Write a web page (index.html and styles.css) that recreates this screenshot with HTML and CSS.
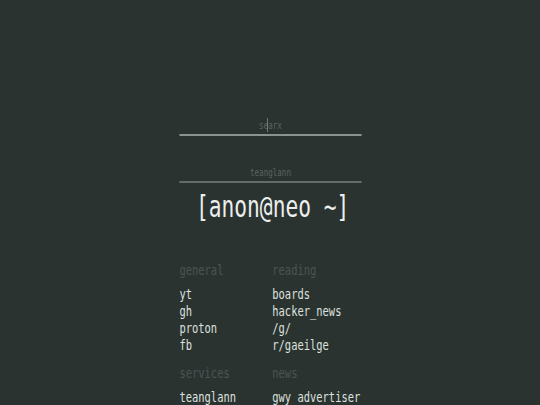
FILE: index.html
```html
<!DOCTYPE html>
<html lang="en">
<head>
<meta charset="utf-8">
<title>[anon@neo ~]</title>
<link rel="stylesheet" href="styles.css">
</head>
<body>
<main class="main">
  <form class="search">
    <div class="field field-active">
      <input class="input" type="text" placeholder="searx">
      <span class="caret"></span>
    </div>
    <div class="field">
      <input class="input" type="text" placeholder="teanglann">
    </div>
  </form>
  <h1 class="title">[anon@neo ~]</h1>
  <div class="groups">
    <section class="group">
      <h2 class="group-title">general</h2>
      <ul class="links">
        <li><a href="#">yt</a></li>
        <li><a href="#">gh</a></li>
        <li><a href="#">proton</a></li>
        <li><a href="#">fb</a></li>
      </ul>
    </section>
    <section class="group">
      <h2 class="group-title">reading</h2>
      <ul class="links">
        <li><a href="#">boards</a></li>
        <li><a href="#">hacker_news</a></li>
        <li><a href="#">/g/</a></li>
        <li><a href="#">r/gaeilge</a></li>
      </ul>
    </section>
    <section class="group">
      <h2 class="group-title">services</h2>
      <ul class="links">
        <li><a href="#">teanglann</a></li>
      </ul>
    </section>
    <section class="group">
      <h2 class="group-title">news</h2>
      <ul class="links">
        <li><a href="#">gwy_advertiser</a></li>
      </ul>
    </section>
  </div>
</main>
</body>
</html>
```
FILE: styles.css
```css
* { box-sizing: border-box; }

html, body {
  margin: 0;
  padding: 0;
  height: 100%;
}

body {
  background: #2b3331;
  color: #dadedc;
  font-family: "DejaVu Sans Mono", "Liberation Mono", monospace;
  overflow: hidden;
}

.main {
  width: 253px;
  margin: 0 auto;
  padding-top: 118px;
  transform: scaleX(0.72);
  transform-origin: center top;
}

.search {
  display: flex;
  flex-direction: column;
  gap: 29px;
  margin: 0;
}

.field {
  position: relative;
  border-bottom: 2px solid #646b69;
  padding-bottom: 2px;
}

.field-active {
  border-bottom-color: #8c9290;
}

.input {
  display: block;
  width: 100%;
  height: 14px;
  padding: 0;
  border: 0;
  outline: none;
  background: transparent;
  color: #dadedc;
  font-family: inherit;
  font-size: 10.5px;
  line-height: 14px;
  text-align: center;
}

.input::placeholder {
  color: #5c6361;
  opacity: 1;
}

.caret {
  position: absolute;
  left: 122px;
  top: 0;
  width: 1px;
  height: 14px;
  background: #8c9290;
}

.title {
  margin: 6px 0 0;
  font-size: 29.5px;
  font-weight: normal;
  line-height: 36px;
  text-align: center;
  color: #ecefee;
  padding-left: 6px;
}

.groups {
  display: grid;
  grid-template-columns: 129px 1fr;
  row-gap: 11px;
  margin-top: 37px;
}

.group-title {
  margin: 0 0 7px;
  font-size: 14.5px;
  font-weight: normal;
  line-height: 17px;
  color: #4c5452;
}

.links {
  list-style: none;
  margin: 0;
  padding: 0;
  font-size: 14.5px;
  line-height: 17px;
}

.links a {
  color: #dde1df;
  text-decoration: none;
}
```
